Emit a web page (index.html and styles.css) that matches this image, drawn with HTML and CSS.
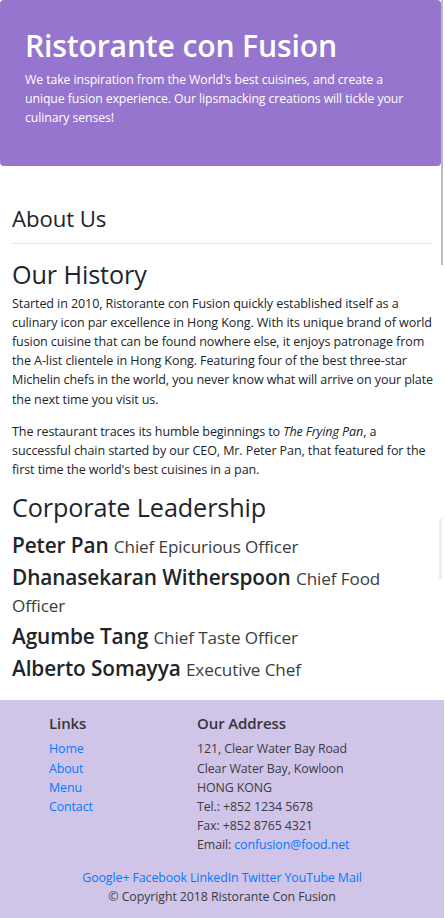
FILE: index.html
```html
<!DOCTYPE html>
<html lang="en">
<head>
<meta charset="utf-8">
<title>Ristorante con Fusion - About Us</title>
<link rel="stylesheet" href="styles.css">
</head>
<body>
<header class="jumbotron">
  <h1 class="brand-title">Ristorante con Fusion</h1>
  <p class="brand-lead">We take inspiration from the World's best cuisines, and create a unique fusion experience. Our lipsmacking creations will tickle your culinary senses!</p>
</header>

<main class="container">
  <section class="page-head">
    <h3 class="page-title">About Us</h3>
    <hr class="divider">
  </section>

  <section class="history">
    <h2 class="section-title">Our History</h2>
    <p class="text">Started in 2010, Ristorante con Fusion quickly established itself as a culinary icon par excellence in Hong Kong. With its unique brand of world fusion cuisine that can be found nowhere else, it enjoys patronage from the A-list clientele in Hong Kong. Featuring four of the best three-star Michelin chefs in the world, you never know what will arrive on your plate the next time you visit us.</p>
    <p class="text">The restaurant traces its humble beginnings to <em>The Frying Pan</em>, a successful chain started by our CEO, Mr. Peter Pan, that featured for the first time the world's best cuisines in a pan.</p>
  </section>

  <section class="leadership">
    <h2 class="section-title">Corporate Leadership</h2>
    <ul class="leaders">
      <li class="leader"><span class="leader-name">Peter Pan</span> <small class="leader-role">Chief Epicurious Officer</small></li>
      <li class="leader"><span class="leader-name">Dhanasekaran Witherspoon</span> <small class="leader-role">Chief Food Officer</small></li>
      <li class="leader"><span class="leader-name">Agumbe Tang</span> <small class="leader-role">Chief Taste Officer</small></li>
      <li class="leader"><span class="leader-name">Alberto Somayya</span> <small class="leader-role">Executive Chef</small></li>
    </ul>
  </section>
</main>

<footer class="footer">
  <div class="footer-grid">
    <div class="footer-col footer-links">
      <h5 class="footer-title">Links</h5>
      <ul class="link-list">
        <li><a href="#">Home</a></li>
        <li><a href="#">About</a></li>
        <li><a href="#">Menu</a></li>
        <li><a href="#">Contact</a></li>
      </ul>
    </div>
    <div class="footer-col footer-address">
      <h5 class="footer-title">Our Address</h5>
      <address class="address">
        121, Clear Water Bay Road<br>
        Clear Water Bay, Kowloon<br>
        HONG KONG<br>
        Tel.: +852 1234 5678<br>
        Fax: +852 8765 4321<br>
        Email: <a href="#">confusion@food.net</a>
      </address>
    </div>
  </div>
  <div class="social">
    <a href="#">Google+</a> <a href="#">Facebook</a> <a href="#">LinkedIn</a> <a href="#">Twitter</a> <a href="#">YouTube</a> <a href="#">Mail</a>
  </div>
  <p class="copyright">© Copyright 2018 Ristorante Con Fusion</p>
</footer>

<div class="scroll-thumb" aria-hidden="true"></div>
<div class="scroll-ghost" aria-hidden="true"></div>
</body>
</html>
```

FILE: styles.css
```css
* { box-sizing: border-box; }

html, body {
  margin: 0;
  padding: 0;
}

body {
  font-family: "Open Sans", "Noto Sans", sans-serif;
  font-size: 12.4px;
  line-height: 19.2px;
  color: #212529;
  background: #fff;
  letter-spacing: -0.1px;
}

a { color: #007bff; text-decoration: none; }

/* Jumbotron */
.jumbotron {
  background: #9575cd;
  color: #fff;
  padding: 27px 25px 38px;
  border-radius: 4px;
  margin: 0 4px 0 0;
}

.brand-title {
  margin: 0 0 5px;
  font-size: 30.2px;
  line-height: 38px;
  font-weight: 600;
  letter-spacing: -0.2px;
}

.brand-lead {
  margin: 0;
  font-size: 12.3px;
  line-height: 19.2px;
}

/* Content */
.container {
  padding: 39px 12px 13px;
}

.page-title {
  margin: 0;
  font-size: 22.2px;
  line-height: 27px;
  font-weight: 500;
}

.divider {
  margin: 11px 0 15px;
  border: 0;
  border-top: 1px solid #e5e5e5;
}

.section-title {
  margin: 0 0 4px;
  font-size: 25.2px;
  line-height: 31px;
  font-weight: 500;
}

.text {
  margin: 0 0 13px;
  font-size: 12.55px;
}

.leadership .section-title {
  margin-bottom: 9px;
}

.leaders {
  list-style: none;
  margin: 0;
  padding: 0;
}

.leader {
  font-size: 20.8px;
  line-height: 27px;
  margin-bottom: 5px;
}

.leader-name {
  font-weight: 600;
}

.leader-role {
  font-size: 17.1px;
  line-height: 1;
  font-weight: 400;
  color: #3a3d40;
}

/* Footer */
.footer {
  background: #d1c4e9;
  padding: 13px 0 26px;
  width: 444px;
}

.footer-grid {
  display: grid;
  grid-template-columns: 37px 148px 1fr;
}

.footer-col {
  padding: 0 12px;
}

.footer-links { grid-column: 2; }
.footer-address { grid-column: 3; }

.footer-title {
  margin: 0 0 6px;
  font-size: 15px;
  line-height: 20px;
  font-weight: 600;
  color: #33363a;
}

.link-list {
  list-style: none;
  margin: 0;
  padding: 0;
}

.address {
  font-style: normal;
  color: #3a3d40;
  margin: 0;
}

.social {
  text-align: center;
  margin-top: 13px;
}

.copyright {
  text-align: center;
  margin: 0;
  color: #3a3d40;
}

/* overlay scrollbar remnants */
.scroll-thumb {
  position: absolute;
  left: 441px;
  top: 0;
  width: 2px;
  height: 265px;
  background: #bdbdbd;
}

.scroll-ghost {
  position: absolute;
  left: 439px;
  top: 519px;
  width: 3px;
  height: 60px;
  background: #ececec;
}
```
